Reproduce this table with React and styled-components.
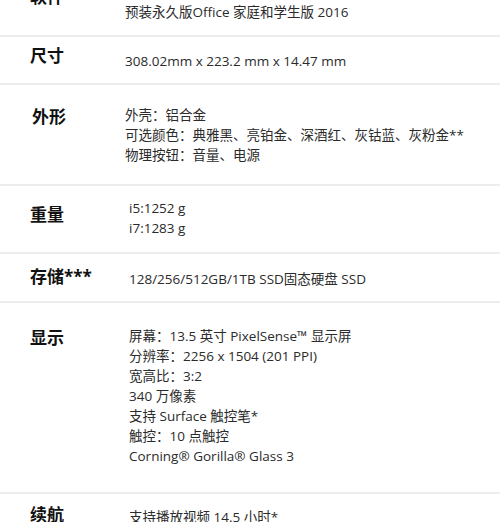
import React from "react";
import styled, { createGlobalStyle } from "styled-components";

const GlobalStyle = createGlobalStyle`
  html, body {
    margin: 0;
    padding: 0;
    background: #ffffff;
  }
  body {
    font-family: "Open Sans", "Noto Sans CJK SC", sans-serif;
    overflow: hidden;
  }
`;

const specs = [
  { label: "软件", lines: ["预装永久版Office 家庭和学生版 2016"], height: 35, labelTop: -15, valueTop: 2, indent: 95 },
  { label: "尺寸", lines: ["308.02mm x 223.2 mm x 14.47 mm"], height: 46, labelTop: 7, valueTop: 14, indent: 95 },
  {
    label: "外形",
    lines: ["外壳：铝合金", "可选颜色：典雅黑、亮铂金、深酒红、灰钴蓝、灰粉金**", "物理按钮：音量、电源"],
    height: 99,
    labelTop: 20,
    valueTop: 20,
    indent: 95,
    labelShift: 2,
  },
  { label: "重量", lines: ["i5:1252 g", "i7:1283 g"], height: 66, labelTop: 17, valueTop: 12, indent: 99 },
  { label: "存储***", lines: ["128/256/512GB/1TB SSD固态硬盘 SSD"], height: 47, labelTop: 11, valueTop: 15, indent: 99 },
  {
    label: "显示",
    lines: [
      "屏幕：13.5 英寸 PixelSense™ 显示屏",
      "分辨率：2256 x 1504 (201 PPI)",
      "宽高比：3:2",
      "340 万像素",
      "支持 Surface 触控笔*",
      "触控：10 点触控",
      "Corning® Gorilla® Glass 3",
    ],
    height: 189,
    labelTop: 23,
    valueTop: 23,
    indent: 99,
  },
  { label: "续航", lines: ["支持播放视频 14.5 小时*"], height: 40, labelTop: 9, valueTop: 13, indent: 99, last: true },
];

const App = () => {
  return (
    <>
      <GlobalStyle />
      <SpecTable>
        {specs.map((row, i) => (
          <Row key={i} height={row.height} indent={row.indent} last={row.last}>
            <Label top={row.labelTop} shift={row.labelShift}>
              {row.label}
            </Label>
            <Values top={row.valueTop}>
              {row.lines.map((line, j) => (
                <Line key={j}>{line}</Line>
              ))}
            </Values>
          </Row>
        ))}
      </SpecTable>
    </>
  );
};

export default App;

const SpecTable = styled.div`
  width: 500px;
  height: 522px;
  overflow: hidden;
`;

const Row = styled.div`
  display: grid;
  grid-template-columns: ${(props) => props.indent}px 1fr;
  align-items: start;
  padding-left: 30px;
  height: ${(props) => props.height}px;
  border-bottom: ${(props) => (props.last ? "none" : "2px solid #ededeb")};
`;

const Label = styled.div`
  margin-top: ${(props) => props.top}px;
  padding-left: ${(props) => props.shift || 0}px;
  font-size: 17px;
  line-height: 24px;
  font-weight: 700;
  color: #111111;
  white-space: nowrap;
`;

const Values = styled.div`
  margin-top: ${(props) => props.top}px;
  display: flex;
  flex-direction: column;
`;

const Line = styled.div`
  font-size: 13.5px;
  line-height: 20px;
  color: #2b2b2b;
  white-space: nowrap;
`;
